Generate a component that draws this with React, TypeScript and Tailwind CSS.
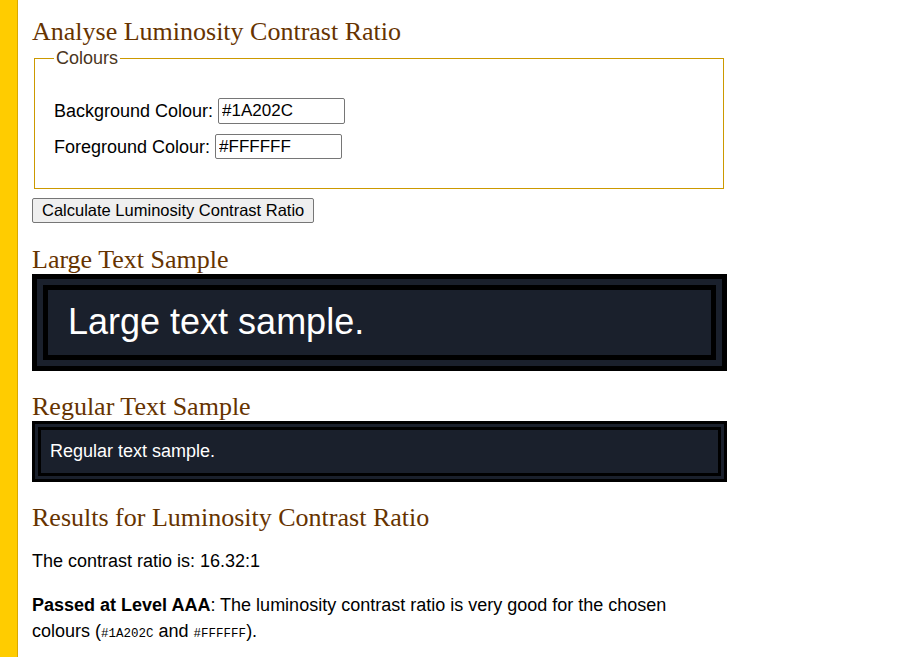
import React from 'react';

const serif = "font-['Liberation_Serif','Times_New_Roman',serif]";

export default function App() {
  const bg = '#1A202C';
  const fg = '#FFFFFF';

  return (
    <div className="flex min-h-[657px] bg-white font-['Liberation_Sans',Arial,sans-serif] text-[18px] leading-[26px] text-black">
      {/* Side rail */}
      <div className="w-[18px] shrink-0 border-r border-[#d9a800] bg-[#ffcc00]" />

      <main className="ml-[14px] w-[695px]">
        <h1 className={`${serif} mt-[17px] text-[26px] leading-[30px] font-normal text-[#663300]`}>
          Analyse Luminosity Contrast Ratio
        </h1>

        <form onSubmit={e => e.preventDefault()}>
          <fieldset className="mx-[2px] mt-[2px] w-[690px] border border-[#cc9900] pl-[19px] pt-[31px] pb-[29px]">
            <legend className="px-[2px] text-[18px] leading-[18px] text-[#4a3520]">Colours</legend>

            <div className="flex h-[26px] items-center">
              <label htmlFor="bg">Background Colour:</label>
              <input
                id="bg"
                defaultValue={bg}
                className="ml-[5px] h-[26px] w-[127px] rounded-[2px] border border-[#767676] px-[3px] text-[17px] text-black outline-none"
              />
            </div>
            <div className="mt-[10px] flex h-[25px] items-center">
              <label htmlFor="fg">Foreground Colour:</label>
              <input
                id="fg"
                defaultValue={fg}
                className="ml-[5px] h-[25px] w-[127px] rounded-[2px] border border-[#767676] px-[3px] text-[17px] text-black outline-none"
              />
            </div>
          </fieldset>

          <button
            type="submit"
            className="mt-[9px] block h-[25px] rounded-[2px] border border-[#767676] bg-[#efefef] px-[9px] text-[16.5px] leading-[19px] text-black"
          >
            Calculate Luminosity Contrast Ratio
          </button>
        </form>

        <h2 className={`${serif} mt-[24px] text-[26px] leading-[26px] font-normal text-[#663300]`}>
          Large Text Sample
        </h2>
        <div className="mt-[1px] border-[16px] border-double border-black bg-[#1A202C] pl-[20px] pt-[11px] pb-[13px] text-[36px] leading-[41px] text-white">
          Large text sample.
        </div>

        <h2 className={`${serif} mt-[23px] text-[26px] leading-[26px] font-normal text-[#663300]`}>
          Regular Text Sample
        </h2>
        <div className="mt-[1px] border-[9px] border-double border-black bg-[#1A202C] pl-[9px] pt-[8px] pb-[9px] text-[18px] leading-[26px] text-white">
          Regular text sample.
        </div>

        <h2 className={`${serif} mt-[23px] text-[26px] leading-[26px] font-normal text-[#663300]`}>
          Results for Luminosity Contrast Ratio
        </h2>
        <p className="mt-[17px]">The contrast ratio is: 16.32:1</p>
        <p className="mt-[18px]">
          <strong className="font-bold">Passed at Level AAA</strong>: The luminosity contrast ratio is very good for the chosen
          colours (<code className="font-['Liberation_Mono',monospace] text-[12.5px] leading-none">{bg}</code> and{' '}
          <code className="font-['Liberation_Mono',monospace] text-[12.5px] leading-none">{fg}</code>).
        </p>
      </main>
    </div>
  );
}
